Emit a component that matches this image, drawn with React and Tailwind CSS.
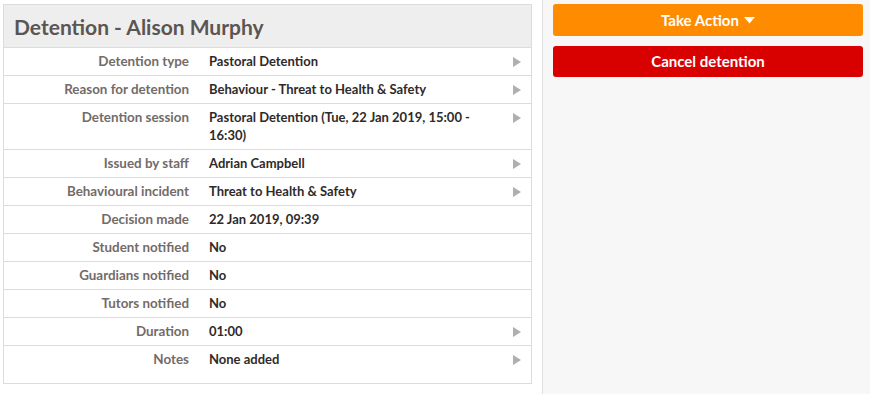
import React from "react";

const rows = [
  { label: "Detention type", value: "Pastoral Detention", arrow: true },
  { label: "Reason for detention", value: "Behaviour - Threat to Health & Safety", arrow: true },
  { label: "Detention session", value: "Pastoral Detention (Tue, 22 Jan 2019, 15:00 - 16:30)", arrow: true },
  { label: "Issued by staff", value: "Adrian Campbell", arrow: true },
  { label: "Behavioural incident", value: "Threat to Health & Safety", arrow: true },
  { label: "Decision made", value: "22 Jan 2019, 09:39", arrow: false },
  { label: "Student notified", value: "No", arrow: false },
  { label: "Guardians notified", value: "No", arrow: false },
  { label: "Tutors notified", value: "No", arrow: false },
  { label: "Duration", value: "01:00", arrow: true },
  { label: "Notes", value: "None added", arrow: true, last: true },
];

function Arrow() {
  return (
    <svg width="8" height="10" viewBox="0 0 8 10" className="block">
      <path d="M0 0 L8 5 L0 10 Z" fill="#b3adab" />
    </svg>
  );
}

export default function App() {
  return (
    <div
      className="flex w-[870px] h-[394px] bg-white overflow-hidden"
      style={{ fontFamily: "Lato, 'Noto Sans', sans-serif" }}
    >
      <div className="w-[542px] shrink-0 pl-[3px] pt-[4px] pr-[10px]">
        <div className="border border-[#dcdcdc] bg-white">
          <div className="h-[43px] bg-[#eeeeee] border-b border-[#dcdcdc] flex items-center pl-[10px]">
            <h1 className="text-[21px] font-bold text-[#5b5553] leading-none">
              Detention - Alison Murphy
            </h1>
          </div>
          <div className="pb-[10px]">
            {rows.map((r, i) => (
              <div
                key={i}
                className={
                  "flex leading-[18px] " +
                  (r.last ? "" : "border-b border-[#dcdcdc]")
                }
              >
                <div className="w-[193px] shrink-0 text-right pr-[8px] pt-[4px] pb-[5px] text-[13.4px] text-[#736b69] font-bold">
                  {r.label}
                </div>
                <div className="w-[285px] shrink-0 pl-[12px] pt-[4px] pb-[5px] text-[13px] text-[#2f2a29] font-bold">
                  {r.value}
                </div>
                <div className="flex-1 flex justify-end pr-[10px] pt-[9px]">
                  {r.arrow && <Arrow />}
                </div>
              </div>
            ))}
          </div>
        </div>
      </div>
      <div className="flex-1 bg-[#f7f7f7] border-l border-[#e0e0e0] pl-[10px] pr-[7px] pt-[4px] flex flex-col gap-[10px]">
        <button className="h-[32px] w-full rounded-[3px] bg-[#ff8c00] text-white font-bold text-[15px] flex items-center justify-center gap-[5px]">
          Take Action
          <svg width="11" height="7" viewBox="0 0 11 7">
            <path d="M0 0 L11 0 L5.5 6.5 Z" fill="#ffffff" />
          </svg>
        </button>
        <button className="h-[31px] w-full rounded-[3px] bg-[#d90000] text-white font-bold text-[15px] flex items-center justify-center">
          Cancel detention
        </button>
      </div>
    </div>
  );
}
